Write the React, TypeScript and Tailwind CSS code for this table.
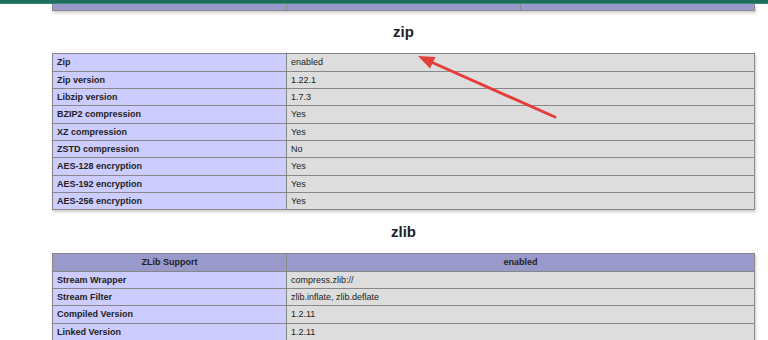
const zipRows: [string, string][] = [
  ["Zip", "enabled"],
  ["Zip version", "1.22.1"],
  ["Libzip version", "1.7.3"],
  ["BZIP2 compression", "Yes"],
  ["XZ compression", "Yes"],
  ["ZSTD compression", "No"],
  ["AES-128 encryption", "Yes"],
  ["AES-192 encryption", "Yes"],
  ["AES-256 encryption", "Yes"],
];

const zlibRows: [string, string][] = [
  ["Stream Wrapper", "compress.zlib://"],
  ["Stream Filter", "zlib.inflate, zlib.deflate"],
  ["Compiled Version", "1.2.11"],
  ["Linked Version", "1.2.11"],
];

const cell = "border border-[#888] px-[4px] py-0 leading-[16.35px] align-baseline";

function InfoTable({ rows, head }: { rows: [string, string][]; head?: [string, string] }) {
  return (
    <table className="w-[703px] border-collapse shadow-[1px_2px_3px_#ccc] text-[9px] text-[#222]">
      <tbody>
        {head && (
          <tr className="bg-[#9999cc] font-bold">
            <th className={`${cell} w-[234px] text-center`}>{head[0]}</th>
            <th className={`${cell} text-center`}>{head[1]}</th>
          </tr>
        )}
        {rows.map(([k, v]) => (
          <tr key={k}>
            <td className={`${cell} w-[234px] bg-[#ccccff] font-bold`}>{k}</td>
            <td className={`${cell} bg-[#dddddd]`}>{v}</td>
          </tr>
        ))}
      </tbody>
    </table>
  );
}

export default function App() {
  return (
    <div className="relative w-[768px] h-[340px] overflow-hidden bg-white font-['Liberation_Sans',Arial,sans-serif]">
      <div className="h-[4px] bg-[#1f6d5b] border-b border-[#2f8a72]" />

      <div className="pl-[52px]">
        {/* tail end of the previous module table */}
        <div className="w-[703px] h-[7px] flex bg-[#9999cc] border-x border-b border-[#888] shadow-[1px_2px_3px_#ccc]">
          <div className="w-[234px] border-r border-[#888]" />
          <div className="w-[234px] border-r border-[#888]" />
          <div className="flex-1" />
        </div>

        <h2 className="w-[703px] mt-[13px] mb-[12.5px] text-center text-[15px] font-bold text-[#222] leading-[16.8px]">
          zip
        </h2>
        <InfoTable rows={zipRows} />

        <h2 className="w-[703px] mt-[13.5px] mb-[12.5px] text-center text-[15px] font-bold text-[#222] leading-[16.8px]">
          zlib
        </h2>
        <InfoTable rows={zlibRows} head={["ZLib Support", "enabled"]} />
      </div>

      <svg className="absolute left-0 top-0 pointer-events-none" width="768" height="340">
        <line x1="555" y1="117" x2="430" y2="61.5" stroke="#e53e3a" strokeWidth="3" strokeLinecap="round" />
        <polygon points="418,56 435.5,57 430,68.5" fill="#e53e3a" />
      </svg>
    </div>
  );
}
